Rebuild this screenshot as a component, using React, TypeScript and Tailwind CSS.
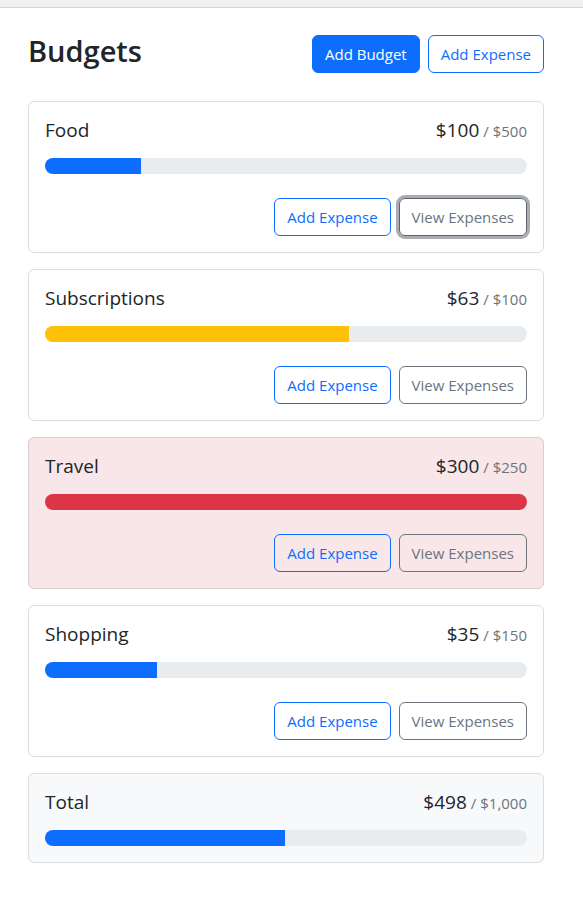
const font = { fontFamily: '"Segoe UI", "Open Sans", "Noto Sans", sans-serif' };

type Budget = {
  name: string;
  amount: number;
  max: number;
  variant: "normal" | "danger" | "light";
  focused?: boolean;
};

const budgets: Budget[] = [
  { name: "Food", amount: 100, max: 500, variant: "normal", focused: true },
  { name: "Subscriptions", amount: 63, max: 100, variant: "normal" },
  { name: "Travel", amount: 300, max: 250, variant: "danger" },
  { name: "Shopping", amount: 35, max: 150, variant: "normal" },
];

const money = (n: number) => "$" + n.toLocaleString("en-US");

// bootstrap-ish progress colours
function barColor(amount: number, max: number) {
  const ratio = amount / max;
  if (ratio < 0.5) return "bg-[#0d6efd]";
  if (ratio < 0.75) return "bg-[#ffc107]";
  return "bg-[#dc3545]";
}

function ProgressBar({ amount, max, color }: { amount: number; max: number; color?: string }) {
  const pct = Math.min(100, (amount / max) * 100);
  return (
    <div className="h-4 w-full overflow-hidden rounded-full bg-[#e9ecef]">
      <div className={`h-full ${color ?? barColor(amount, max)}`} style={{ width: `${pct}%` }} />
    </div>
  );
}

function CardTitle({ name, amount, max }: { name: string; amount: number; max: number }) {
  return (
    <div className="mb-4 flex h-6 items-baseline justify-between text-[19px] leading-[24px] text-[#212529]">
      <div>{name}</div>
      <div className="flex items-baseline">
        {money(amount)}
        <span className="ml-1 text-[15px] text-[#6c757d]">/ {money(max)}</span>
      </div>
    </div>
  );
}

function BudgetCard({ budget }: { budget: Budget }) {
  const bg =
    budget.variant === "danger"
      ? "bg-[#f8e6e8] border-[#d9cdcf]"
      : budget.variant === "light"
      ? "bg-[#f8f9fa] border-[#dcdcdc]"
      : "bg-white border-[#dcdcdc]";
  return (
    <div className={`rounded-[6px] border p-4 ${bg}`}>
      <CardTitle name={budget.name} amount={budget.amount} max={budget.max} />
      <ProgressBar amount={budget.amount} max={budget.max} />
      <div className="mt-6 flex justify-end gap-2">
        <button className="h-[38px] rounded-[6px] border border-[#0d6efd] px-3 text-[15px] leading-6 text-[#0d6efd]">
          Add Expense
        </button>
        <button
          className={`h-[38px] rounded-[6px] border px-3 text-[15px] leading-6 text-[#6c757d] ${
            budget.focused ? "border-[#5c636a] ring-[3px] ring-[#a9acb0]" : "border-[#6c757d]"
          }`}
        >
          View Expenses
        </button>
      </div>
    </div>
  );
}

export default function App() {
  return (
    <div className="min-h-screen bg-white" style={font}>
      <div className="h-2 border-b border-[#d6d6d6] bg-[#f0f0f0]" />
      <div className="my-6 ml-4 w-[540px] px-3">
        {/* header */}
        <div className="mb-6 flex items-center gap-2">
          <h1 className="mr-auto mb-2 mt-[2px] text-[29px] font-semibold leading-[1.2] text-[#212529]">Budgets</h1>
          <button className="h-[38px] rounded-[6px] border border-[#0d6efd] bg-[#0d6efd] px-3 text-[15px] leading-6 text-white">
            Add Budget
          </button>
          <button className="h-[38px] rounded-[6px] border border-[#0d6efd] bg-white px-3 text-[15px] leading-6 text-[#0d6efd]">
            Add Expense
          </button>
        </div>

        <div className="grid grid-cols-1 items-start gap-4">
          {budgets.map((b) => (
            <BudgetCard key={b.name} budget={b} />
          ))}
          {/* total */}
          <div className="rounded-[6px] border border-[#dcdcdc] bg-[#f8f9fa] p-4">
            <CardTitle name="Total" amount={498} max={1000} />
            <ProgressBar amount={498} max={1000} color="bg-[#0d6efd]" />
          </div>
        </div>
      </div>
    </div>
  );
}
